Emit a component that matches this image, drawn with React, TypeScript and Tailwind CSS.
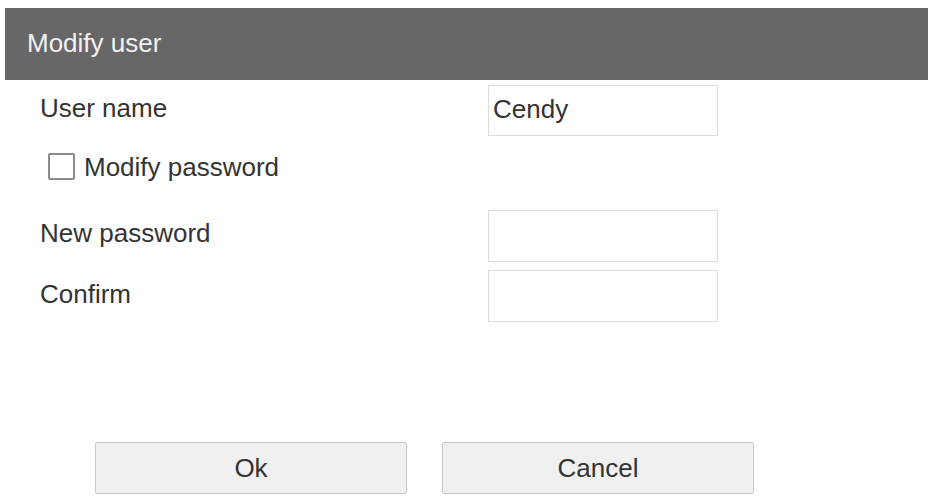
import React from "react";

export default function App() {
  return (
    <div
      className="w-[931px] h-[498px] bg-white pt-[8px] overflow-hidden"
      style={{ fontFamily: '"Liberation Sans", Arial, sans-serif' }}
    >
      <div className="ml-[5px] w-[923px] h-[72px] bg-[#676767] flex items-center pl-[22px] pb-[2px] text-[26px] text-[#f2f2f2]">
        Modify user
      </div>
      <div className="pl-[40px] pt-[5px] text-[26px] text-[#333]">
        <div className="flex items-center h-[51px]">
          <span className="w-[448px] pb-[4px]">User name</span>
          <div className="w-[230px] h-[51px] border border-[#dcdcdc] flex items-center pl-[4px] pb-[2px] text-[#333]">
            Cendy
          </div>
        </div>
        <div className="mt-[16px] h-[28px] flex items-center pl-[8px]">
          <div className="w-[27px] h-[27px] border-2 border-[#8a8a8a] rounded-[2px] bg-white" />
          <span className="ml-[9px] pt-[2px]">Modify password</span>
        </div>
        <div className="mt-[30px] flex items-center h-[52px]">
          <span className="w-[448px] pb-[5px]">New password</span>
          <div className="w-[230px] h-[52px] border border-[#dcdcdc]" />
        </div>
        <div className="mt-[8px] flex items-center h-[52px]">
          <span className="w-[448px] pb-[4px]">Confirm</span>
          <div className="w-[230px] h-[52px] border border-[#dcdcdc]" />
        </div>
        <div className="mt-[120px] ml-[55px] flex gap-[35px]">
          <button className="w-[312px] h-[52px] border border-[#c8c8c8] bg-[#f0f0f0] rounded-[2px] text-[26px] text-[#333]">
            Ok
          </button>
          <button className="w-[312px] h-[52px] border border-[#c8c8c8] bg-[#f0f0f0] rounded-[2px] text-[26px] text-[#333]">
            Cancel
          </button>
        </div>
      </div>
    </div>
  );
}
